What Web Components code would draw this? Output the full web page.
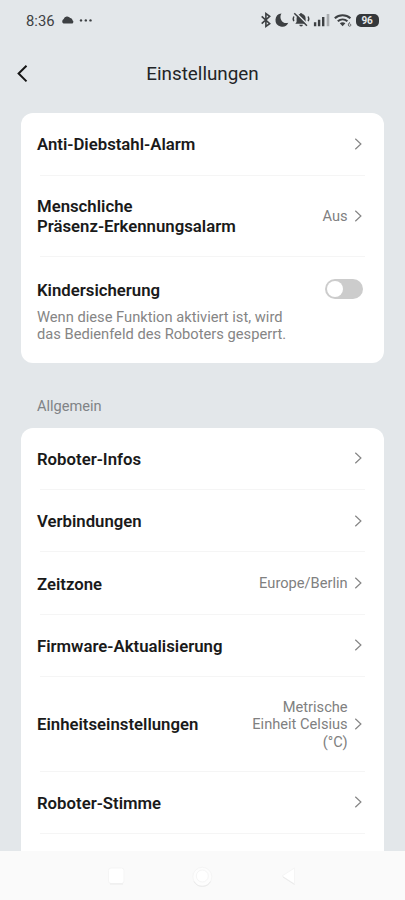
<!DOCTYPE html>
<html lang="de"><head><meta charset="utf-8"><title>Einstellungen</title>
<style>
html,body{margin:0;height:100%}
body{background:#e3e7ea;font-family:Roboto,"Liberation Sans",sans-serif;color:#1a1a1a;overflow:hidden}
</style></head><body>
<template id="t-app"><style>
:host{display:flex;flex-direction:column;height:900px;width:405px;overflow:hidden}
main{flex:1;min-height:0;overflow:hidden;padding:0 20.7px 0 20.7px}
h2{margin:0;font-weight:400;font-size:14.6px;line-height:18px;color:#808386;padding:34.5px 0 12.5px 16.3px}
</style>
<status-bar></status-bar>
<title-bar>Einstellungen</title-bar>
<main>
<settings-card>
<settings-row style="--h:62.5px">Anti-Diebstahl-Alarm</settings-row>
<settings-row style="--h:81.5px">Menschliche<br>Präsenz-Erkennungsalarm<span slot="value">Aus</span></settings-row>
<switch-row>Kindersicherung<span slot="note">Wenn diese Funktion aktiviert ist, wird<br>das Bedienfeld des Roboters gesperrt.</span></switch-row>
</settings-card>
<h2>Allgemein</h2>
<settings-card>
<settings-row style="--h:62.4px;--dy:.8px">Roboter-Infos</settings-row>
<settings-row style="--h:62.4px">Verbindungen</settings-row>
<settings-row style="--h:62.4px;--dy:.8px">Zeitzone<span slot="value">Europe/Berlin</span></settings-row>
<settings-row style="--h:62.4px">Firmware-Aktualisierung</settings-row>
<settings-row style="--h:94.6px">Einheitseinstellungen<span slot="value">Metrische<br>Einheit Celsius<br>(°C)</span></settings-row>
<settings-row style="--h:62.4px">Roboter-Stimme</settings-row>
<settings-row style="--h:62.4px"></settings-row>
</settings-card>
</main>
<nav-bar></nav-bar>
</template>
<template id="t-status"><style>
:host{display:flex;align-items:center;height:40px;box-sizing:border-box;padding:0 26.5px 0 26px;font-size:14.8px;color:#3d4043}
span{line-height:20px;padding-top:1px}
svg{display:block;fill:currentColor}
.l{flex:1;display:flex;align-items:center}
b{margin-left:2px;width:23px;height:13px;border-radius:5px;background:#35383b;color:#e9ebed;font-size:10px;line-height:13.5px;text-align:center;letter-spacing:-.2px}
</style>
<div class="l"><span>8:36</span>
<svg width="34" height="12" viewBox="60 14 34 12" style="margin-left:5px"><path d="M63.500 23.600a2.600 2.600 0 0 1 .2-4.600 3.600 3.600 0 0 1 6.500-.9c1.300.1 2.200 1 2.200 2.200 1.500.4 1.200 3.300-.4 3.300z"/><circle cx="81" cy="20.400" r="1.200"/><circle cx="85.800" cy="20.400" r="1.200"/><circle cx="90.500" cy="20.400" r="1.200"/></svg></div>
<svg width="95" height="20" viewBox="259 10 95 20">
<path d="M261.700 16.300l8 7.300-3.800 2.900V13.500l3.800 2.900-8 7.300" fill="none" stroke="currentColor" stroke-width="1.600"/>
<path d="M281.500 13.400a6.700 6.700 0 1 0 6.800 9.400c-6.100 1.700-9.800-4.900-6.800-9.400z"/>
<path d="M295.300 23.800l1.300-1.900v-3.700a4.600 4.600 0 0 1 3.400-4.100v-.9h2.200v.9a4.600 4.600 0 0 1 3.400 4.100v3.700l1.300 1.900zM299.300 24.800h3.600a1.800 1.800 0 0 1-3.600 0z"/>
<path d="M293.800 16.500c-.7 1.400-.7 3.200 0 4.600M308.200 16.500c.7 1.400.7 3.200 0 4.600" fill="none" stroke="currentColor" stroke-width="1.500"/>
<path d="M295.500 12.500l12.600 12.600" stroke="#e3e7ea" stroke-width="1.600"/><path d="M294.300 13.200l12.600 12.600" stroke="currentColor" stroke-width="1.500"/>
<path d="M313.900 22.300h2.400v3.900h-2.400zM317.900 19.800h2.400v6.400h-2.400zM322 17.100h2.400v9.100h-2.400z"/><path d="M326.700 14h2.600v12.200h-2.600z" opacity=".35"/>
<g fill="none" stroke="currentColor" stroke-width="2.100"><path d="M334.800 18.300c4.400-4 11.200-4 15.600 0M337.800 21.300c2.800-2.500 6.800-2.500 9.600 0"/></g><path d="M339.800 23.300c1.700-1.400 3.900-1.400 5.600 0l-2.800 2.900z"/>
<path d="M350 22.400c-2 .8-2.300 3.800-.5 3.800s1.800-2.300.1-2.300" fill="none" stroke="currentColor" stroke-width=".8"/></svg>
<b>96</b>
</template>
<template id="t-title"><style>
:host{display:grid;grid-template-columns:40px 1fr 40px;align-items:center;height:67px;margin-bottom:6px;font-size:18.85px;color:#222426;text-align:center}
svg{display:block;margin-left:16px}
</style><svg width="14" height="20" viewBox="0 0 14 20" fill="none" stroke="#151515" stroke-width="2"><path d="M10.500 1.700L2.600 9.500l7.900 7.900"/></svg><span><slot></slot></span></template>
<template id="t-card"><style>:host{display:block;background:#fff;border-radius:12px;padding:0 20px 0 16.3px;overflow:hidden}</style><slot></slot></template>
<template id="t-row"><style>
:host{display:flex;align-items:center;height:var(--h);position:relative;font-size:16.75px;font-weight:600;line-height:19.8px}
:host::after{content:"";position:absolute;left:3px;right:-1px;bottom:0;height:1px;background:#f5f5f5}
.t{flex:1;padding-top:calc(1.2px + var(--dy,0px))}
.v{font-weight:400;font-size:14.65px;line-height:17.3px;color:#808080;text-align:right;padding-top:1px}
svg{display:block;margin:-1px 0 0 5.7px}
</style><div class="t"><slot></slot></div><div class="v"><slot name="value"></slot></div><svg width="11" height="14" viewBox="0 0 11 14" fill="none" stroke="#858585" stroke-width="1.200"><path d="M2.300 1.700L7.900 7 2.300 12.300"/></svg></template>
<template id="t-switch"><style>
:host{display:grid;grid-template-columns:1fr 38px;height:105.5px;box-sizing:border-box;padding:23px 1px 0 0;font-size:16.75px;font-weight:600;line-height:20px}
.n{font-weight:400;font-size:14.7px;line-height:17.4px;color:#858585;margin-top:8.5px}
i{display:block;width:38px;height:20px;border-radius:10px;background:#ccc;box-sizing:border-box;padding:2px;margin-top:-1px}
i::before{content:"";display:block;width:16px;height:16px;border-radius:50%;background:#fff}
</style><div><slot></slot><div class="n"><slot name="note"></slot></div></div><i></i></template>
<template id="t-nav"><style>:host{display:block;height:49px;background:#fafafa}svg{display:block}</style>
<svg width="405" height="49" viewBox="0 851 405 49"><g fill="#fff" stroke="#f5f5f5" stroke-width="1"><rect x="108.500" y="868" width="15.500" height="15.500" rx="2.500"/><circle cx="202.300" cy="876.800" r="9.500" fill="#fdfdfd"/><circle cx="202.300" cy="876" r="6"/><path d="M294.500 868v16L282 876z"/></g><path d="M110 884h13M194 881.500a9.500 9.500 0 0 0 16.600 0M283 877l11.500 7.500" fill="none" stroke="#eaeaea"/></svg></template>
<script>
for (const [name,id] of [['status-bar','t-status'],['title-bar','t-title'],['settings-card','t-card'],['settings-row','t-row'],['switch-row','t-switch'],['nav-bar','t-nav'],['settings-app','t-app']])
  customElements.define(name,class extends HTMLElement{
    constructor(){super();this.attachShadow({mode:'open'}).append(document.getElementById(id).content.cloneNode(true));}
  });
</script>
<settings-app></settings-app>
</body></html>
